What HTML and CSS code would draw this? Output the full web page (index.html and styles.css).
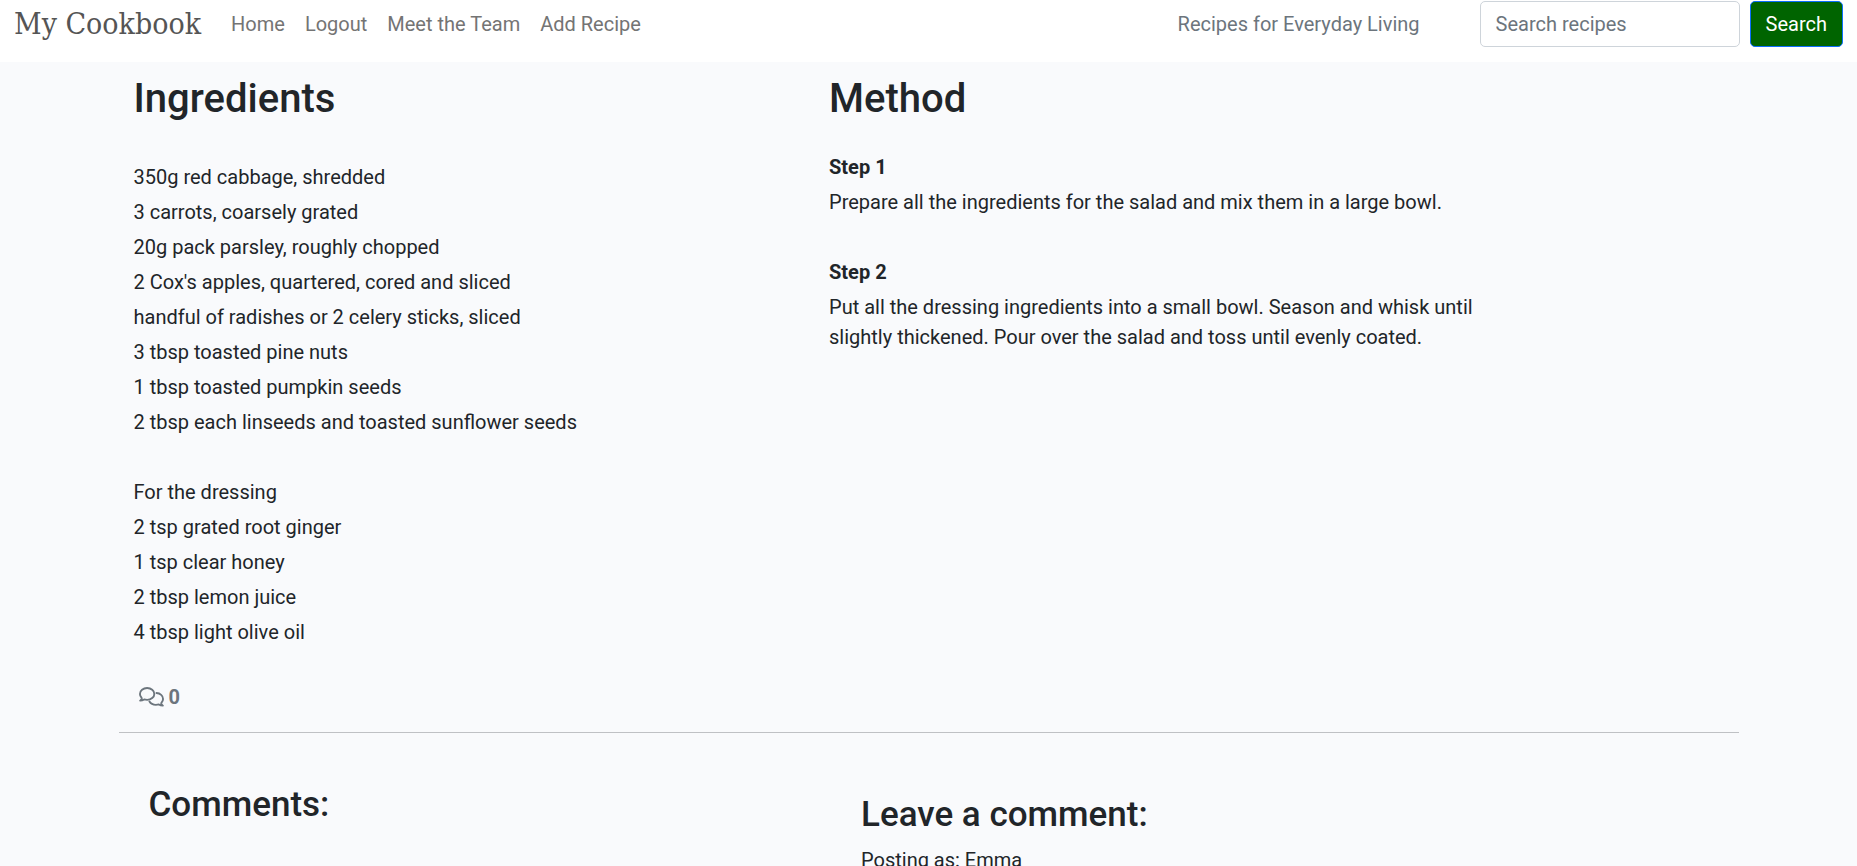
FILE: index.html
```html
<!DOCTYPE html>
<html lang="en">
<head>
<meta charset="utf-8">
<title>My Cookbook</title>
<link rel="stylesheet" href="styles.css">
</head>
<body>
<header class="navbar">
  <a class="brand" href="#">My Cookbook</a>
  <nav class="nav">
    <a href="#">Home</a>
    <a href="#">Logout</a>
    <a href="#">Meet the Team</a>
    <a href="#">Add Recipe</a>
  </nav>
  <span class="tagline">Recipes for Everyday Living</span>
  <form class="search">
    <input type="search" placeholder="Search recipes" aria-label="Search recipes">
    <button type="button">Search</button>
  </form>
</header>
<main class="container">
  <div class="recipe">
    <section>
      <h1>Ingredients</h1>
      <ul class="ingredients">
        <li>350g red cabbage, shredded</li>
        <li>3 carrots, coarsely grated</li>
        <li>20g pack parsley, roughly chopped</li>
        <li>2 Cox's apples, quartered, cored and sliced</li>
        <li>handful of radishes or 2 celery sticks, sliced</li>
        <li>3 tbsp toasted pine nuts</li>
        <li>1 tbsp toasted pumpkin seeds</li>
        <li>2 tbsp each linseeds and toasted sunflower seeds</li>
      </ul>
      <ul class="ingredients">
        <li>For the dressing</li>
        <li>2 tsp grated root ginger</li>
        <li>1 tsp clear honey</li>
        <li>2 tbsp lemon juice</li>
        <li>4 tbsp light olive oil</li>
      </ul>
    </section>
    <section>
      <h1>Method</h1>
      <div class="step">
        <strong>Step 1</strong>
        <p>Prepare all the ingredients for the salad and mix them in a large bowl.</p>
      </div>
      <div class="step">
        <strong>Step 2</strong>
        <p>Put all the dressing ingredients into a small bowl. Season and whisk until slightly thickened. Pour over the salad and toss until evenly coated.</p>
      </div>
    </section>
  </div>
  <div class="count">
    <svg class="count-icon" viewBox="0 0 640 512" aria-hidden="true">
      <path d="M208 24C106 24 24 92 24 176c0 36 15 68 39 94 9 10 9 22 4 33-8 16-20 31-37 46 38 0 72-11 102-30 24 6 49 9 76 9 102 0 184-68 184-152S310 24 208 24z"/>
      <path d="M447 154c97 6 169 71 169 150 0 36-15 68-39 94-9 10-9 22-4 33 8 16 20 31 37 46-38 0-72-11-102-30-24 6-49 9-76 9-72 0-134-34-164-84"/>
    </svg>
    <span>0</span>
  </div>
  <hr>
  <div class="discussion">
    <section>
      <h2>Comments:</h2>
    </section>
    <section class="leave">
      <h2>Leave a comment:</h2>
      <p>Posting as: Emma</p>
    </section>
  </div>
</main>
</body>
</html>
```
FILE: styles.css
```css
* { box-sizing: border-box; }

html { scrollbar-width: none; }

body {
  margin: 0;
  background: #f9fafc;
  color: #212529;
  font: 400 20px/30px Roboto, sans-serif;
}

h1, h2, p, ul { margin: 0; }

.navbar {
  display: flex;
  align-items: center;
  padding: 1px 14px 15px;
  background: #fff;
}

.brand {
  margin-right: 20px;
  color: #555;
  font: 400 30px/42px "DejaVu Serif Condensed", "DejaVu Serif", serif;
  text-decoration: none;
}

.nav { display: flex; }

.nav a {
  padding: 0 10px;
  color: #747474;
  text-decoration: none;
}

.tagline {
  margin-left: auto;
  color: #6c757d;
}

.search {
  display: flex;
  gap: 10px;
  margin-left: 60px;
}

.search input {
  width: 260px;
  height: 46px;
  padding: 0 15px;
  border: 1px solid #ced4da;
  border-radius: 5px;
  background: #fff;
  color: #212529;
  font: inherit;
}

.search input::placeholder { color: #6c757d; opacity: 1; }

.search button {
  padding: 0 15px;
  border: 1px solid #0d6efd;
  border-radius: 5px;
  background: #006400;
  color: #fff;
  font: inherit;
}

.container {
  max-width: 1650px;
  margin: 0 auto;
  padding: 12px 15px 0;
}

.recipe {
  display: grid;
  grid-template-columns: 13fr 13fr 4fr;
  column-gap: 49px;
  padding: 0 15px;
}

h1 { font: 500 40px/50px Roboto, sans-serif; }

h2 { font: 500 35px/42px Roboto, sans-serif; }

.ingredients {
  display: grid;
  gap: 5px;
  margin-top: 40px;
  padding: 0;
  list-style: none;
}

.step {
  display: grid;
  gap: 5px;
  margin-top: 40px;
}

.recipe h1 + .ingredients { margin-top: 38px; }

.recipe h1 + .step { margin-top: 28px; }

.count {
  display: flex;
  align-items: center;
  gap: 5px;
  margin-top: 35px;
  padding-left: 20px;
  color: #6c757d;
  font-weight: 700;
}

.count-icon {
  width: 25px;
  height: 20px;
  fill: none;
  stroke: currentColor;
  stroke-width: 48;
  stroke-linejoin: round;
  stroke-linecap: round;
}

hr {
  height: 1px;
  margin: 20px 0 0;
  border: 0;
  background: #bfc1c4;
}

.discussion {
  display: grid;
  grid-template-columns: 1fr 1fr;
  column-gap: 30px;
  padding: 51px 195px 0 30px;
}

.leave { padding-top: 10px; }

.leave p { margin-top: 9px; }
```
